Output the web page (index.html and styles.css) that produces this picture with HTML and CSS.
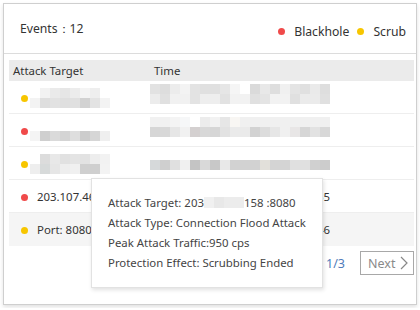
FILE: index.html
```html
<!DOCTYPE html>
<html lang="en">
<head>
    <meta charset="UTF-8">
    <title>Events</title>
    <link rel="stylesheet" href="styles.css">
</head>
<body>
    <div class="card">
        <div class="head">
            <div class="count">Events：12</div>
            <div class="legend">
                <span class="dot red"></span><span class="lbl">Blackhole</span>
                <span class="dot yellow"></span><span class="lbl">Scrub</span>
            </div>
        </div>
        <div class="table">
            <div class="row th">
                <div class="c1">Attack Target</div>
                <div class="c2">Time</div>
            </div>
            <div class="row">
                <div class="c1"><span class="dot yellow"></span><div class="mosaic m-a"></div></div>
                <div class="c2"><div class="mosaic m-t1"></div></div>
            </div>
            <div class="row">
                <div class="c1"><span class="dot red"></span><div class="mosaic m-b"></div></div>
                <div class="c2"><div class="mosaic m-t2"></div></div>
            </div>
            <div class="row">
                <div class="c1"><span class="dot yellow"></span><div class="mosaic m-c"></div></div>
                <div class="c2"><div class="mosaic m-t3"></div></div>
            </div>
            <div class="row">
                <div class="c1"><span class="dot red"></span><span class="cut">203.107.46.158</span></div>
                <div class="c2"><span class="tm"><span>10:21:35</span></span></div>
            </div>
            <div class="row hover">
                <div class="c1"><span class="dot yellow"></span><span class="cut">Port: 8080</span></div>
                <div class="c2"><span class="tm"><span>10:19:46</span></span></div>
            </div>
        </div>
        <div class="pager">
            <span class="pages">1/3</span>
            <button class="next">Next <svg width="10" height="14" viewBox="0 0 10 14"><path d="M2 1 L8 7 L2 13" fill="none" stroke="#888" stroke-width="1.2"/></svg></button>
        </div>

        <div class="tip">
            <p>Attack Target: 203<span class="hide"></span>158 :8080</p>
            <p>Attack Type: Connection Flood Attack</p>
            <p>Peak Attack Traffic:950 cps</p>
            <p>Protection Effect: Scrubbing Ended</p>
        </div>
    </div>
</body>
</html>
```

FILE: styles.css
```css
*{
    margin: 0;
    padding: 0;
    box-sizing: border-box;
}
body{
    background-color: #fff;
    font-family: 'Noto Sans', sans-serif;
    color: #333;
}
.card{
    position: relative;
    margin: 3px;
    width: 414px;
    height: 302px;
    border: 1px solid #cfcfcf;
    box-shadow: 0 2px 4px rgba(0,0,0,0.12);
    background-color: #fff;
}
.head{
    height: 50px;
    border-bottom: 1px solid #dcdcdc;
    display: flex;
    align-items: center;
    justify-content: space-between;
    padding: 0 10px 0 16px;
    font-size: 12.2px;
}
.legend{
    display: flex;
    align-items: center;
    margin-top: 6px;
}
.legend .lbl{
    margin-left: 9px;
    margin-right: 8px;
}
.legend .lbl:last-child{
    margin-right: 0;
}
.dot{
    display: inline-block;
    width: 7px;
    height: 7px;
    border-radius: 50%;
    flex-shrink: 0;
}
.red{
    background-color: #f04a4a;
}
.yellow{
    background-color: #f7c600;
}
.table{
    padding: 6px 2px 0 5px;
    font-size: 11.4px;
}
.row{
    display: flex;
    height: 33px;
    border-bottom: 1px solid #eeeeee;
    align-items: center;
}
.row.th{
    height: 21px;
    background-color: #ebebeb;
    border-bottom: none;
}
.row.hover{
    background-color: #f5f5f5;
    border-bottom: none;
}
.c1{
    width: 141px;
    padding-left: 4px;
    display: flex;
    align-items: center;
    height: 100%;
    white-space: nowrap;
}
.row .c1 .dot{
    margin: 2px 9px 0 8px;
}
.cut{
    display: block;
    width: 54px;
    overflow: hidden;
}
.c2{
    padding-left: 4px;
    display: flex;
    align-items: center;
    height: 100%;
}
.tm{
    display: flex;
    justify-content: flex-end;
    width: 8px;
    margin-left: 168px;
    overflow: hidden;
    white-space: nowrap;
}
.mosaic{
    height: 20px;
    margin-left: -7px;
    margin-top: 2px;
}
.c2 .mosaic{
    margin-left: -4px;
    margin-top: -7px;
    width: 180px;
    background-color: #fff;
}
.m-a{
    background:
        linear-gradient(90deg, #fff 0 10px, #f2f2f2 10px 20px, #eaeaea 20px 30px, #e6e6e6 30px 40px, #ececec 40px 50px, #f4f4f4 50px 60px, #eeeeee 60px 70px, #fff 70px) top/80px 10px no-repeat,
        linear-gradient(90deg, #f3f3f3 0 10px, #dedede 10px 20px, #e2e2e2 20px 30px, #dfdfdf 30px 40px, #e0e0e0 40px 50px, #d2d2d2 50px 60px, #e3e3e3 60px 70px, #f3f3f3 70px) bottom/80px 10px no-repeat;
    width: 80px;
}
.m-b{
    background:
        linear-gradient(90deg, #f4f4f4 0 10px, #cfcfcf 10px 20px, #dadada 20px 30px, #d4d4d4 30px 40px, #dedede 40px 50px, #cccccc 50px 60px, #d6d6d6 60px 70px, #efefef 70px) bottom/80px 10px no-repeat;
    width: 80px;
}
.m-c{
    background:
        linear-gradient(90deg, #fff 0 10px, #dcdcdc 10px 20px, #e8e8e8 20px 30px, #e1e1e1 30px 40px, #e4e4e4 40px 50px, #e2e2e2 50px 60px, #ededed 60px 70px, #f2f2f2 70px) top/80px 10px no-repeat,
        linear-gradient(90deg, #eeeeee 0 10px, #d7dada 10px 20px, #e6e6e6 20px 30px, #eeeeee 30px 40px, #f0f0f0 40px 50px, #cfcfcf 50px 70px, #f3f3f3 70px) bottom/80px 10px no-repeat;
    width: 80px;
}
.m-t1{
    background:
        linear-gradient(90deg, #e2e2e2 0 10px, #dddddd 10px 20px, #ececec 20px 30px, #f3f3f3 30px 40px, #e3e3e3 40px 50px, #e0e0e0 50px 70px, #e6e6e6 70px 80px, #f5f5f5 80px 90px, #fff 90px 100px, #dadada 100px 110px, #e8e8e8 110px 120px, #dedede 120px 130px, #f0f0f0 130px 140px, #e4e4e4 140px 150px, #e0e0e0 150px 160px, #eaeaea 160px 170px, #dedede 170px) top/180px 10px no-repeat,
        linear-gradient(90deg, #ececec 0 10px, #e0e0e0 10px 20px, #f1f1f1 20px 40px, #e3e3e3 40px 50px, #eeeeee 50px 70px, #e2e2e2 70px 80px, #f2f2f2 80px 100px, #e0e0e0 100px 110px, #e4e4e4 110px 120px, #f2f2f2 120px 140px, #e0e0e0 140px 150px, #ebebeb 150px 170px, #e0e0e0 170px) bottom/180px 10px no-repeat;
}
.m-t2{
    background:
        linear-gradient(90deg, #f1f1f1 0 20px, #f4f4f4 20px 30px, #f6f7f8 30px 40px, #fff 40px 50px, #ececec 50px 60px, #f2f2f2 60px 70px, #e6e6e6 70px 80px, #f8f6f3 80px 90px, #f0f0f0 90px 180px) top/180px 10px no-repeat,
        linear-gradient(90deg, #d6d6d6 0 10px, #d8d8d8 10px 20px, #e6e6e6 20px 30px, #f1f1f1 30px 40px, #d4d0d0 40px 50px, #d8d8d8 50px 60px, #d6d6d6 60px 70px, #e2e2e2 70px 80px, #eaeaea 80px 100px, #d2d2d2 100px 110px, #dcdcdc 110px 120px, #e6e6e6 120px 130px, #f0f0f0 130px 140px, #e8e6e6 140px 150px, #d6d6d6 150px 160px, #e2e2e2 160px 170px, #d8d8d8 170px) bottom/180px 10px no-repeat;
}
.m-t3{
    background:
        linear-gradient(90deg, #d6d9da 0 10px, #cfcfcf 10px 20px, #e0e0e0 20px 30px, #f0f0f0 30px 40px, #c4c4c4 40px 50px, #d9d9d9 50px 60px, #c8c8c8 60px 70px, #e8e8e8 70px 80px, #d2d2d2 80px 110px, #e2e0da 110px 120px, #d4d4d4 120px 140px, #e0e0e0 140px 160px, #d0d0d0 160px 170px, #cccccc 170px) bottom/180px 10px no-repeat;
}
.pager{
    display: flex;
    justify-content: flex-end;
    align-items: center;
    padding: 5px 2px 0 0;
    font-size: 12.5px;
}
.pages{
    color: #4f7cba;
    margin-right: 15px;
}
.next{
    display: flex;
    align-items: center;
    gap: 4px;
    height: 24px;
    width: 54px;
    padding-left: 7px;
    border: 1px solid #a8a8a8;
    background-color: #fff;
    color: #8a8a8a;
    font-family: 'Noto Sans', sans-serif;
    font-size: 12.5px;
}
.tip{
    position: absolute;
    left: 87px;
    top: 174px;
    width: 232px;
    height: 110px;
    padding: 14px 0 0 16px;
    background-color: #fff;
    border: 1px solid #e2e2e2;
    box-shadow: 1px 2px 4px rgba(0,0,0,0.12);
    font-size: 11.4px;
    line-height: 20px;
    color: #444;
    white-space: nowrap;
}
.hide{
    display: inline-block;
    width: 40px;
    height: 11px;
    vertical-align: -1px;
    background: linear-gradient(90deg, #f0f0f0 0 10px, #e8e8e8 10px 20px, #ececec 20px);
}
```
